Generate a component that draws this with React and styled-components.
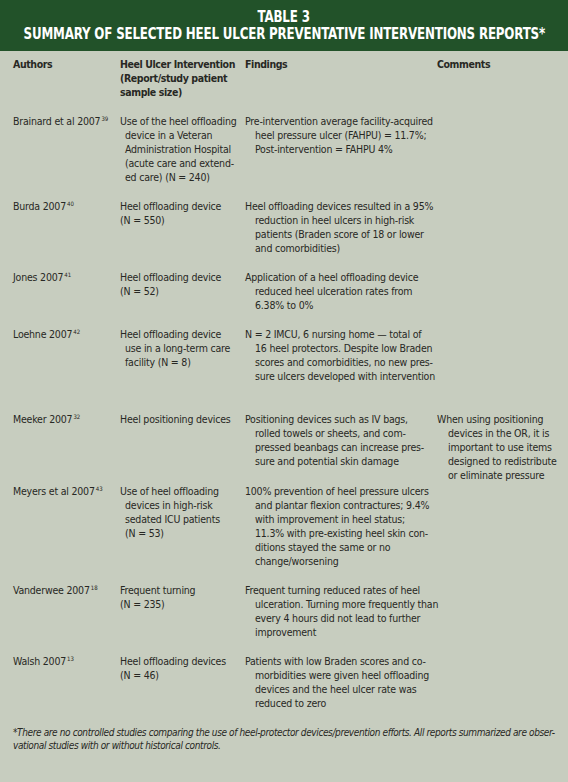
import React from "react";
import styled, { createGlobalStyle } from "styled-components";

const GlobalStyle = createGlobalStyle`
    html, body {
        margin: 0;
        padding: 0;
        background: #c7cdbf;
    }
`;

const Page = styled.div`
    width: 568px;
    height: 782px;
    overflow: hidden;
    background: #c7cdbf;
    color: #272824;
    font-family: "DejaVu Sans Condensed", "Liberation Sans", sans-serif;
    font-size: 10.5px;
    letter-spacing: -0.2px;
    line-height: 14px;
`;

const Banner = styled.header`
    height: 51px;
    background: #225229;
    color: #ffffff;
    display: flex;
    flex-direction: column;
    align-items: center;
    justify-content: center;
    font-family: "DejaVu Sans Condensed", sans-serif;
    font-weight: bold;
    font-size: 15px;
    line-height: 17px;
    letter-spacing: -0.2px;
`;

const Headline = styled.span`
    display: inline-block;
    white-space: nowrap;
    transform: scaleX(0.88);
`;

const Row = styled.div`
    display: grid;
    grid-template-columns: 107px 125px 192px 1fr;
    padding: ${(p) => p.$top || 0}px 6px ${(p) => p.$gap}px 13px;
    font-weight: ${(p) => (p.$head ? "bold" : "normal")};
    letter-spacing: ${(p) => (p.$head ? "-0.4px" : "inherit")};
`;

const Cell = styled.div`
    display: flex;
    flex-direction: column;
    white-space: nowrap;
`;

const Line = styled.span`
    display: block;
    white-space: nowrap;
    padding-left: ${(p) => (p.$first ? 0 : p.$indent)}px;
`;

const Ref = styled.sup`
    font-size: 6px;
    line-height: 0;
    vertical-align: 4px;
    margin-left: 1px;
    letter-spacing: 0;
`;

const Footnote = styled.p`
    margin: 0;
    padding: 16px 0 0 13px;
    font-style: italic;
    font-size: 10px;
    line-height: 13px;
    letter-spacing: -0.38px;
    white-space: nowrap;
`;

const rows = [
    {
        author: "Brainard et al 2007",
        ref: "39",
        intervention: [["Use of the heel offloading", "device in a Veteran", "Administration Hospital", "(acute care and extend-", "ed care) (N = 240)"]],
        findings: [["Pre-intervention average facility-acquired", "heel pressure ulcer (FAHPU) = 11.7%;", "Post-intervention = FAHPU 4%"]],
    },
    {
        author: "Burda 2007",
        ref: "40",
        intervention: [["Heel offloading device"], ["(N = 550)"]],
        findings: [["Heel offloading devices resulted in a 95%", "reduction in heel ulcers in high-risk", "patients (Braden score of 18 or lower", "and comorbidities)"]],
    },
    {
        author: "Jones 2007",
        ref: "41",
        intervention: [["Heel offloading device"], ["(N = 52)"]],
        findings: [["Application of a heel offloading device", "reduced heel ulceration rates from", "6.38% to 0%"]],
    },
    {
        author: "Loehne 2007",
        ref: "42",
        gap: 29,
        intervention: [["Heel offloading device", "use in a long-term care", "facility (N = 8)"]],
        findings: [["N = 2 IMCU, 6 nursing home \u2014 total of", "16 heel protectors. Despite low Braden", "scores and comorbidities, no new pres-", "sure ulcers developed with intervention"]],
    },
    {
        author: "Meeker 2007",
        ref: "32",
        gap: 2,
        intervention: [["Heel positioning devices"]],
        findings: [["Positioning devices such as IV bags,", "rolled towels or sheets, and com-", "pressed beanbags can increase pres-", "sure and potential skin damage"]],
        comments: [["When using positioning", "devices in the OR, it is", "important to use items", "designed to redistribute", "or eliminate pressure"]],
    },
    {
        author: "Meyers et al 2007",
        ref: "43",
        intervention: [["Use of heel offloading", "devices in high-risk", "sedated ICU patients", "(N = 53)"]],
        findings: [["100% prevention of heel pressure ulcers", "and plantar flexion contractures; 9.4%", "with improvement in heel status;", "11.3% with pre-existing heel skin con-", "ditions stayed the same or no", "change/worsening"]],
    },
    {
        author: "Vanderwee 2007",
        ref: "18",
        intervention: [["Frequent turning"], ["(N = 235)"]],
        findings: [["Frequent turning reduced rates of heel", "ulceration. Turning more frequently than", "every 4 hours did not lead to further", "improvement"]],
    },
    {
        author: "Walsh 2007",
        ref: "13",
        gap: 0,
        intervention: [["Heel offloading devices"], ["(N = 46)"]],
        findings: [["Patients with low Braden scores and co-", "morbidities were given heel offloading", "devices and the heel ulcer rate was", "reduced to zero"]],
    },
];

const Paragraphs = ({ items = [], indent }) => (
    <Cell>
        {items.map((para, i) =>
            para.map((text, j) => (
                <Line key={i + "-" + j} $first={j === 0} $indent={indent}>
                    {text}
                </Line>
            ))
        )}
    </Cell>
);

const App = () => {
    return (
        <Page>
            <GlobalStyle />
            <Banner>
                <Headline>TABLE 3</Headline>
                <Headline>SUMMARY OF SELECTED HEEL ULCER PREVENTATIVE INTERVENTIONS REPORTS*</Headline>
            </Banner>
            <Row $head $top={6} $gap={15}>
                <Cell>Authors</Cell>
                <Paragraphs items={[["Heel Ulcer Intervention"], ["(Report/study patient"], ["sample size)"]]} indent={0} />
                <Cell>Findings</Cell>
                <Cell>Comments</Cell>
            </Row>
            {rows.map((r) => (
                <Row key={r.author} $gap={r.gap ?? 15}>
                    <Cell>
                        <span>
                            {r.author}
                            <Ref>{r.ref}</Ref>
                        </span>
                    </Cell>
                    <Paragraphs items={r.intervention} indent={5} />
                    <Paragraphs items={r.findings} indent={10} />
                    <Paragraphs items={r.comments} indent={11} />
                </Row>
            ))}
            <Footnote>
                *There are no controlled studies comparing the use of heel-protector devices/prevention efforts. All reports summarized are obser-
                <br />
                vational studies with or without historical controls.
            </Footnote>
        </Page>
    );
};

export default App;
